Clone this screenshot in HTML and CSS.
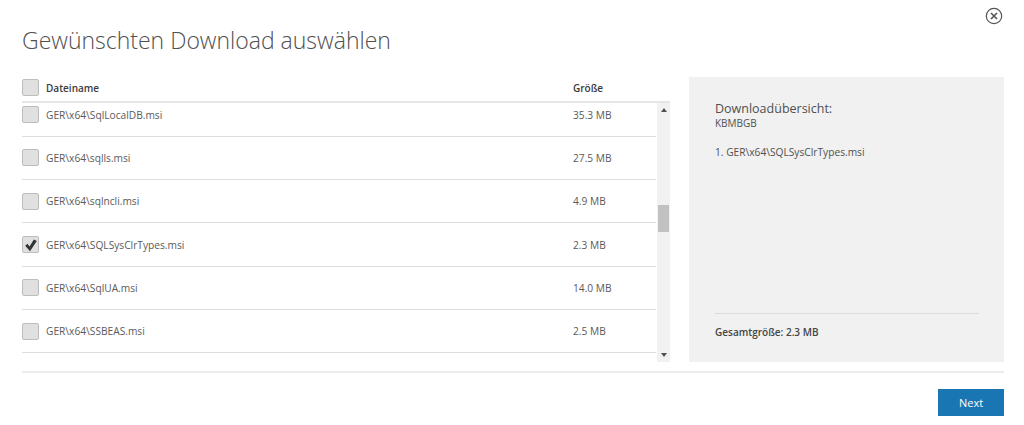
FILE: index.html
```html
<!DOCTYPE html>
<html lang="de">
<head>
<meta charset="utf-8">
<title>Download</title>
<link rel="stylesheet" href="styles.css">
</head>
<body>
<div class="dialog">
  <div class="close-row">
    <svg class="close" viewBox="0 0 18 18" width="18" height="18"><circle cx="9" cy="9" r="7.7" fill="none" stroke="#555" stroke-width="1.2"/><path d="M6 6l6 6M12 6l-6 6" stroke="#555" stroke-width="1.6" fill="none"/></svg>
  </div>
  <h1 class="title">Gewünschten Download auswählen</h1>
  <div class="main">
    <div class="table">
      <div class="head">
        <span class="box"></span>
        <span class="name">Dateiname</span>
        <span class="size">Größe</span>
      </div>
      <div class="body">
        <div class="viewport">
          <div class="rows">
            <div class="row"><span class="box"></span><span class="name">GER\x64\SqlLocalDB.msi</span><span class="size">35.3 MB</span></div>
            <div class="row"><span class="box"></span><span class="name">GER\x64\sqlls.msi</span><span class="size">27.5 MB</span></div>
            <div class="row"><span class="box"></span><span class="name">GER\x64\sqlncli.msi</span><span class="size">4.9 MB</span></div>
            <div class="row"><span class="box"><svg viewBox="0 0 16 16" width="16" height="16"><path d="M2.2 8.8l2.3-2 2 2.6 4.4-7 2.9 1.6-6.8 10.2z" fill="#333"/></svg></span><span class="name">GER\x64\SQLSysClrTypes.msi</span><span class="size">2.3 MB</span></div>
            <div class="row"><span class="box"></span><span class="name">GER\x64\SqlUA.msi</span><span class="size">14.0 MB</span></div>
            <div class="row"><span class="box"></span><span class="name">GER\x64\SSBEAS.msi</span><span class="size">2.5 MB</span></div>
            <div class="row"></div>
          </div>
        </div>
        <div class="scrollbar">
          <span class="arrow up"></span>
          <div class="track"><span class="thumb"></span></div>
          <span class="arrow down"></span>
        </div>
      </div>
    </div>
    <aside class="panel">
      <div class="summary">
        <div class="panel-title">Downloadübersicht:</div>
        <div class="panel-sub">KBMBGB</div>
        <div class="panel-item">1. GER\x64\SQLSysClrTypes.msi</div>
      </div>
      <div class="total">Gesamtgröße: 2.3 MB</div>
    </aside>
  </div>
  <div class="footer">
    <button class="next" type="button">Next</button>
  </div>
</div>
</body>
</html>
```

FILE: styles.css
```css
* { box-sizing: border-box; }
html, body { margin: 0; padding: 0; background: #fff; }
body { font-family: "Open Sans", "Noto Sans", sans-serif; color: #505050; width: 1024px; height: 425px; overflow: hidden; }
.dialog { padding: 7px 20px 0 22px; }
.close-row { display: flex; justify-content: flex-end; height: 18px; margin-right: 1px; }
.close { display: block; }
.title { margin: 0; font-weight: 300; font-size: 23px; line-height: 30px; height: 52px; color: #505050; }
.main { display: flex; gap: 19px; height: 285px; }
.table { width: 648px; display: flex; flex-direction: column; }
.head { display: flex; align-items: center; height: 26px; border-bottom: 2px solid #e6e6e6; padding-bottom: 3px; font-size: 10px; font-weight: 600; color: #3a3a3a; flex: none; }
.box { width: 17px; height: 17px; flex: none; background: #e0e0e0; border: 1px solid #bdbdbd; border-radius: 2px; margin-right: 7px; display: block; position: relative; }
.box svg { display: block; }
.name { width: 527px; flex: none; }
.size { flex: none; }
.body { display: flex; flex: 1; min-height: 0; }
.viewport { width: 634px; overflow: hidden; flex: none; }
.rows { margin-top: -9.6px; }
.row { display: flex; align-items: center; height: 43.33px; border-bottom: 1px solid #dedede; font-size: 10.2px; color: #5a5a5a; }
.scrollbar { margin-left: 1px; width: 13px; background: #f1f1f1; display: flex; flex-direction: column; align-items: center; }
.arrow { width: 0; height: 0; border-left: 3.5px solid transparent; border-right: 3.5px solid transparent; flex: none; }
.arrow.up { border-bottom: 4px solid #505050; margin-top: 5px; }
.arrow.down { border-top: 4px solid #505050; margin-bottom: 5px; }
.track { flex: 1; width: 100%; padding: 93px 1px 0; }
.thumb { display: block; height: 27px; background: #c1c1c1; }
.panel { width: 315px; background: #f1f1f1; padding: 23px 25px 0 26px; display: flex; flex-direction: column; }
.summary { flex: 1; }
.panel-title { font-size: 12.5px; line-height: 17px; color: #505050; }
.panel-sub { font-size: 10px; line-height: 12px; }
.panel-item { font-size: 10.2px; line-height: 14px; margin-top: 16px; }
.total { border-top: 1px solid #dcdcdc; height: 49px; padding-top: 11px; font-size: 10px; line-height: 14px; font-weight: 600; color: #444; }
.footer { margin-top: 9px; border-top: 2px solid #ececec; padding-top: 16px; display: flex; justify-content: flex-end; }
.next { width: 66px; height: 27px; background: #1a76b3; border: 0; color: #fff; font: 400 11px "Open Sans", sans-serif; padding: 0; }
```
